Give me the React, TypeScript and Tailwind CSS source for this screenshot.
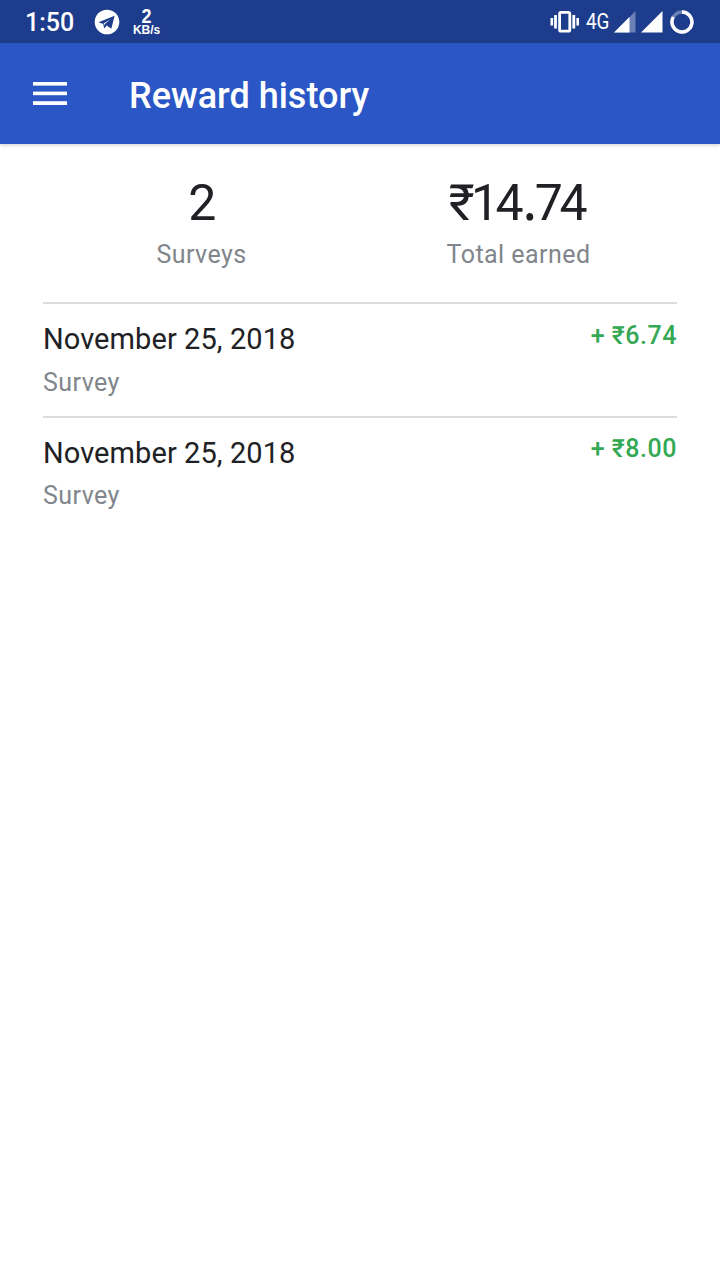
import type { ReactNode } from "react";

type Reward = {
  readonly id: number;
  readonly date: string;
  readonly kind: string;
  readonly amount: string;
};

const rewards: readonly Reward[] = [
  { id: 1, date: "November 25, 2018", kind: "Survey", amount: "+ ₹6.74" },
  { id: 2, date: "November 25, 2018", kind: "Survey", amount: "+ ₹8.00" },
];

function TelegramIcon() {
  return (
    <svg width="26" height="26" viewBox="0 0 26 26" aria-hidden="true">
      <circle cx="13" cy="13" r="12.3" fill="#fff" />
      <path d="M4.5 13.2 20.6 6.8 17.3 19.8 12.6 16.6 10.2 19.6 9.2 15Z" fill="#1d3d8c" />
      <path d="M9.6 14.6 16.2 10.4 10.6 15.2 10.2 16.6Z" fill="#fff" />
    </svg>
  );
}

function VibrateIcon() {
  return (
    <svg width="30" height="24" viewBox="0 0 30 24" fill="#fff" aria-hidden="true">
      <rect x="0.5" y="8" width="2.6" height="7.5" />
      <rect x="4.1" y="5" width="2.8" height="13.5" />
      <rect x="9.6" y="2.4" width="10.2" height="18.8" rx="1.5" fill="none" stroke="#fff" strokeWidth="2.8" />
      <rect x="22.4" y="5" width="2.8" height="13.5" />
      <rect x="26.4" y="8" width="2.6" height="7.5" />
    </svg>
  );
}

function SignalIcon({ partial = false }: { readonly partial?: boolean }) {
  return (
    <svg width="22" height="22" viewBox="0 0 22 22" aria-hidden="true">
      <path d="M0 21.5 21.5 0V21.5Z" fill="#fff" fillOpacity={partial ? 0.35 : 1} />
      {partial && <path d="M0 21.5 15.5 6V21.5Z" fill="#fff" />}
    </svg>
  );
}

function BatteryRing() {
  return (
    <svg width="24" height="24" viewBox="0 0 24 24" fill="none" strokeWidth="3.4" aria-hidden="true">
      <circle cx="12" cy="12" r="10" stroke="#fff" strokeOpacity="0.35" />
      <path d="M12 2A10 10 0 1 1 3.3 7" stroke="#fff" />
    </svg>
  );
}

function MenuIcon() {
  return (
    <svg width="34" height="23" viewBox="0 0 34 23" fill="#fff" aria-hidden="true">
      <rect width="34" height="3.6" />
      <rect y="9.6" width="34" height="3.6" />
      <rect y="19.2" width="34" height="3.8" />
    </svg>
  );
}

function StatusBar() {
  return (
    <div className="flex h-[43px] items-center bg-[#1d3d8c] pr-[26px] pl-[25px] text-white">
      <span className="w-[69px] pt-0.5 text-[25px] leading-none font-medium">1:50</span>
      <TelegramIcon />
      <div className="ml-[11.5px] flex w-[30px] flex-col items-center pt-0.5 font-['Liberation_Sans']">
        <span className="scale-x-90 text-[20px] leading-[16px] font-bold">2</span>
        <span className="text-[12px] leading-[13px] font-bold tracking-[-0.1px] whitespace-nowrap">KB/s</span>
      </div>
      <div className="ml-auto flex items-center">
        <VibrateIcon />
        <span className="ml-1.5 w-7 origin-left scale-x-[0.84] text-[22.5px] leading-none">4G</span>
        <SignalIcon partial />
        <span className="ml-[5px]">
          <SignalIcon />
        </span>
        <span className="ml-[7px]">
          <BatteryRing />
        </span>
      </div>
    </div>
  );
}

function AppBar() {
  return (
    <header className="flex h-[101px] items-center bg-[#2a56c6] pl-[33px] text-white shadow-[0_1px_4px_rgba(0,0,0,0.2)]">
      <button type="button" aria-label="Open menu">
        <MenuIcon />
      </button>
      <h1 className="ml-[62px] pt-1 text-[36px] leading-none font-medium">Reward history</h1>
    </header>
  );
}

function Stat({ value, label }: { readonly value: ReactNode; readonly label: string }) {
  return (
    <div className="flex flex-1 flex-col items-center">
      <span className="h-[60px] text-[50px] leading-[60px] tracking-[-1.8px] text-[#202124]">{value}</span>
      <span className="mt-[7px] text-[25px] leading-[30px] tracking-[0.45px] text-[#80868b]">{label}</span>
    </div>
  );
}

function TotalEarned() {
  return (
    <>
      <span className="tracking-[-3.6px]">₹14</span>
      <span className="ml-[3px] font-['Noto_Sans'] leading-none font-medium">.</span>
      <span className="pr-1 tracking-[-3.4px]">74</span>
    </>
  );
}

function RewardRow({ reward }: { readonly reward: Reward }) {
  return (
    <li className="flex h-[113.5px] justify-between border-t-2 border-[#dadce0]">
      <div>
        <p className="mt-[17px] text-[29px] leading-9 tracking-[0.08px] text-[#202124]">{reward.date}</p>
        <p className="mt-[10.5px] text-[25px] leading-[30px] tracking-[0.45px] text-[#80868b]">{reward.kind}</p>
      </div>
      <span className="mt-[16.5px] text-[25px] leading-[30px] font-medium tracking-[0.52px] text-[#34a853]">{reward.amount}</span>
    </li>
  );
}

export default function App() {
  return (
    <div className="flex h-[1280px] w-[720px] flex-col overflow-hidden bg-white font-[Roboto,sans-serif]">
      <StatusBar />
      <AppBar />
      <main className="px-[43px]">
        <section className="flex h-[158px] pt-[29px]">
          <Stat value="2" label="Surveys" />
          <Stat value={<TotalEarned />} label="Total earned" />
        </section>
        <ul>
          {rewards.map((reward) => (
            <RewardRow key={reward.id} reward={reward} />
          ))}
        </ul>
      </main>
    </div>
  );
}
